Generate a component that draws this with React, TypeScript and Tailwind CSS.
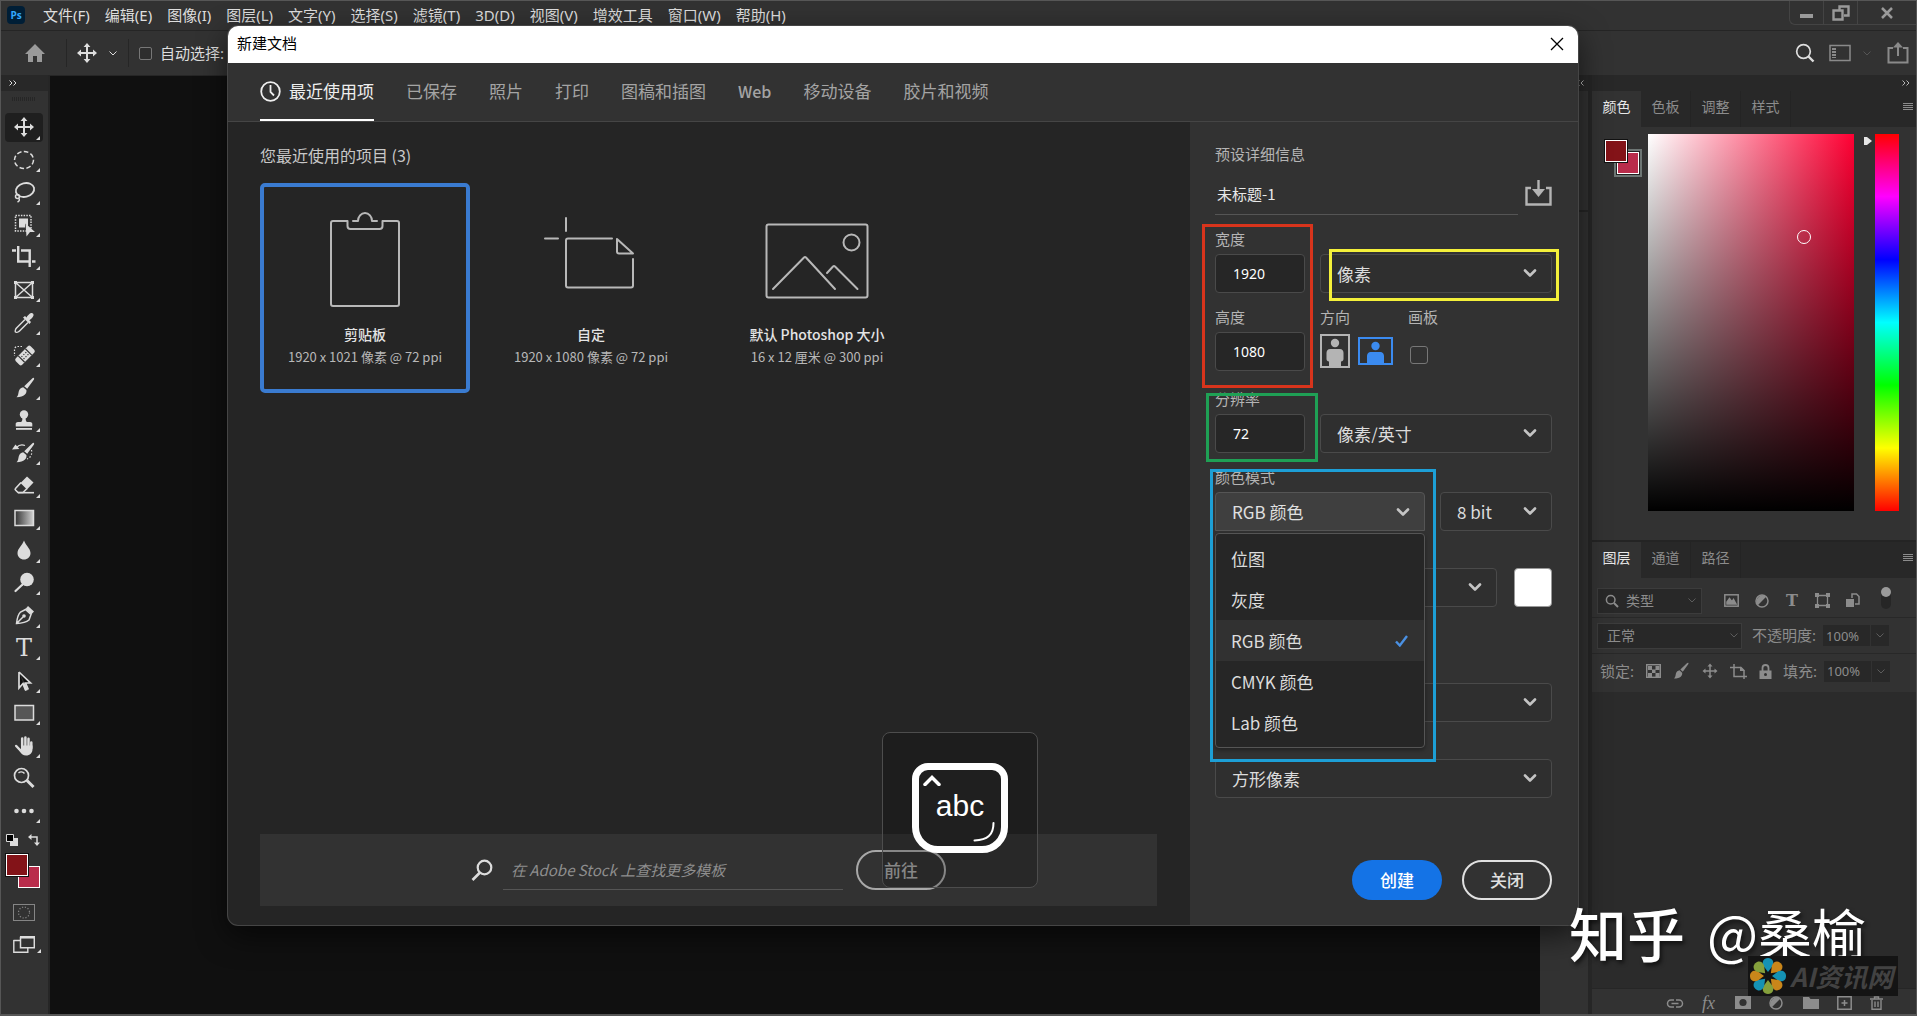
import type { ReactNode } from "react";

const UI = "font-['Noto_Sans','Noto_Sans_CJK_SC',sans-serif]";
const CJK = "font-['Noto_Sans_CJK_SC',sans-serif]";

type SvgProps = { w?: number; h?: number; box?: string; className?: string; children: ReactNode };
function Svg({ w = 24, h = 24, box, className = "", children }: SvgProps) {
  return (
    <svg
      aria-hidden="true"
      width={w}
      height={h}
      viewBox={box ?? `0 0 ${w} ${h}`}
      fill="none"
      stroke="currentColor"
      strokeWidth="1.5"
      className={`shrink-0 ${className}`}
    >
      {children}
    </svg>
  );
}

const MOVE = "M12 2l3.4 4H13v5h5V8.600l4 3.400-4 3.400V13h-5v5h2.400L12 22l-3.400-4H11v-5H6v2.400L2 12l4-3.400V11h5V6H8.600z";

function MoveIcon({ size = 24 }: { size?: number }) {
  return (
    <Svg w={size} h={size} box="0 0 24 24">
      <path d={MOVE} fill="currentColor" stroke="none" />
    </Svg>
  );
}

function BrushShape() {
  return (
    <g fill="currentColor" stroke="none">
      <path d="M21.800 2c.6.500.4 1.200 0 1.800l-6.600 9-3-2.600 8-7.600c.5-.6 1.100-1 1.600-.6z" />
      <path d="M11.200 11.200l3.200 2.800c.6 3.400-1.800 7-9.900 7.200 2-1.800 1.600-3.600 2.300-6 .6-2.200 2.300-3.600 4.400-4z" />
    </g>
  );
}

function Chevron({ className = "" }: { className?: string }) {
  return (
    <Svg w={14} h={9} className={className}>
      <path d="M2 1.500l5 5 5-5" strokeWidth="2.600" strokeLinecap="round" strokeLinejoin="round" />
    </Svg>
  );
}

function ThinChevron({ className = "" }: { className?: string }) {
  return (
    <Svg w={8} h={5} className={className}>
      <path d="M.5.5L4 4 7.500.5" strokeWidth="1" />
    </Svg>
  );
}

function Magnifier({ size = 14 }: { size?: number }) {
  return (
    <Svg w={size} h={size} box="0 0 14 14">
      <circle cx="5.700" cy="5.700" r="4.300" />
      <path d="M9 9l4 4" strokeWidth="2" />
    </Svg>
  );
}

const TOOLS: { name: string; icon: ReactNode; corner?: boolean }[] = [
  { name: "移动工具", icon: <MoveIcon /> },
  {
    name: "椭圆选框工具",
    icon: (
      <Svg>
        <ellipse cx="12" cy="12" rx="9.500" ry="8.500" strokeDasharray="4.600 2.400" />
      </Svg>
    ),
  },
  {
    name: "套索工具",
    icon: (
      <Svg>
        <ellipse cx="13" cy="10" rx="9.300" ry="6.800" transform="rotate(-14 13 10)" strokeWidth="1.800" />
        <circle cx="5.500" cy="16.500" r="2" />
        <path d="M6.500 18c1.500 1.500 1 3-1 4" />
      </Svg>
    ),
  },
  {
    name: "对象选择工具",
    icon: (
      <Svg>
        <rect x="3.500" y="2.500" width="15.500" height="15.500" strokeDasharray="1.500 1.200" />
        <path d="M7 5.500h9v8l-3-3v4H7z" fill="currentColor" stroke="none" />
        <path d="M13.500 10.500l9.500 8.500h-5l-3.500 4.500z" fill="currentColor" stroke="none" />
      </Svg>
    ),
  },
  {
    name: "裁剪工具",
    icon: (
      <Svg>
        <path d="M0 5.500h4M6.200 1v15.500h11M9 5.500h8.700V22M20 16.500h3.500" strokeWidth="2.400" />
      </Svg>
    ),
  },
  {
    name: "图框工具",
    icon: (
      <Svg>
        <path d="M3.500 4.500h17v15h-17zM3.500 4.500l17 15M20.500 4.500l-17 15" />
        <path d="M2 3h3v3H2zM19 3h3v3h-3zM2 18h3v3H2zM19 18h3v3h-3z" fill="currentColor" stroke="none" />
      </Svg>
    ),
  },
  {
    name: "吸管工具",
    icon: (
      <Svg>
        <path d="M13 8.500L4.500 17c-1 1-1.600 3.200-1 4 .8.600 3 0 4-1l8.500-8.500" />
        <path
          d="M11 6.500l2-1.500 1.500 1.500c1-2 2.500-3.500 4.500-4.500 1.500-.5 3 1 2.500 2.500-.8 2-2.300 3.500-4.200 4.700L19 11l-1.500 2z"
          fill="currentColor"
          stroke="none"
        />
      </Svg>
    ),
  },
  {
    name: "污点修复画笔工具",
    icon: (
      <Svg>
        <path d="M10 3.500H5.500a3 3 0 0 0-3 3V13" strokeDasharray="1.500 1.500" strokeWidth="1.200" />
        <g transform="rotate(-45 13 12.500)">
          <rect x="2.500" y="8" width="21" height="9" rx="2" fill="currentColor" stroke="none" />
          <path d="M8 8v9M18 8v9" stroke="#323232" strokeWidth="1.200" />
          <path d="M9.500 11h7M9.500 14h7" stroke="#323232" strokeWidth="1.200" strokeDasharray="1.200 1.600" />
        </g>
      </Svg>
    ),
  },
  {
    name: "画笔工具",
    icon: (
      <Svg>
        <BrushShape />
      </Svg>
    ),
  },
  {
    name: "仿制图章工具",
    icon: (
      <Svg>
        <g fill="currentColor" stroke="none">
          <circle cx="12" cy="6.500" r="4.200" />
          <path d="M10.500 9h3c0 3 .5 4.500 1.500 5h3c1.800 0 2.300 1 2.300 2v2.500H3.700V16c0-1 .5-2 2.300-2h3c1-.5 1.500-2 1.500-5z" />
          <path d="M4 20h16v1.800H4z" />
        </g>
      </Svg>
    ),
  },
  {
    name: "历史记录画笔工具",
    icon: (
      <Svg>
        <BrushShape />
        <path d="M0 8.500l3.500-5 3.800 4.500z" fill="currentColor" stroke="none" />
        <path d="M4.500 6.500C7 3.800 10 3.500 13 4.500" strokeWidth="1.200" />
        <path d="M19.500 9c.8 4-.5 7.500-4.500 9" strokeDasharray="1.500 1.800" strokeWidth="1.200" />
      </Svg>
    ),
  },
  {
    name: "橡皮擦工具",
    icon: (
      <Svg>
        <path d="M15 3.500l6.500 6L15 16.500l-6.500-6.500z" fill="currentColor" stroke="none" />
        <path d="M9 9.500L3.500 15.500c-.5.500-.5 1 0 1.500L6 19.500h5l4-4" strokeWidth="1.600" />
        <path d="M6 19.700h16" strokeWidth="1.600" />
      </Svg>
    ),
  },
  {
    name: "渐变工具",
    icon: (
      <Svg>
        <defs>
          <linearGradient id="toolGradient">
            <stop offset="0" stopColor="#333" />
            <stop offset="1" stopColor="#d0d0d0" />
          </linearGradient>
        </defs>
        <rect x="3" y="4.500" width="18.500" height="15" fill="url(#toolGradient)" />
      </Svg>
    ),
  },
  {
    name: "模糊工具",
    icon: (
      <Svg>
        <path d="M12 2.500c1.800 5 6.500 8 6.500 12.500 0 4-3 6.500-6.500 6.500S5.500 19 5.500 15C5.500 10.500 10.200 7.500 12 2.500z" fill="currentColor" stroke="none" />
      </Svg>
    ),
  },
  {
    name: "减淡工具",
    icon: (
      <Svg>
        <circle cx="15" cy="8.500" r="6.800" fill="currentColor" stroke="none" />
        <path d="M10.500 13.500l-7 6.500" strokeWidth="2.200" strokeLinecap="round" />
      </Svg>
    ),
  },
  {
    name: "钢笔工具",
    icon: (
      <Svg>
        <path d="M4.500 20.500C5 16 6.500 11 8.500 9l5-2.500 5.500 5-2 5.500c-2.500 2-8 3.200-12.500 3.500zM5 20l6-6" />
        <circle cx="12" cy="13" r="1.800" fill="currentColor" stroke="none" />
        <path d="M13.500 6l2.500-3 6 5.500-2.700 3z" fill="currentColor" stroke="none" />
      </Svg>
    ),
  },
  { name: "横排文字工具", icon: <span className="font-['DejaVu_Serif',serif] text-2xl leading-6">T</span> },
  {
    name: "路径选择工具",
    icon: (
      <Svg>
        <path d="M7 3l11.500 11h-5l2.800 6.500M7 3v16l4-4.500 2.800 6.500" fill="#111" strokeWidth="1.700" />
        <path d="M11.700 14.500l2.800 7" strokeWidth="3" />
      </Svg>
    ),
  },
  {
    name: "矩形工具",
    icon: (
      <Svg>
        <rect x="3" y="4.500" width="18.500" height="14.500" fill="#575757" />
      </Svg>
    ),
  },
  {
    name: "抓手工具",
    icon: (
      <Svg>
        <g strokeLinecap="round" strokeWidth="2.500">
          <path d="M10.200 12.500V4.500M13.400 12V3.500M16.500 12.500V4.700M19.300 14V8.500M4.200 12l4.300 4.500" />
        </g>
        <path d="M9 11.500h11.500V15c0 4-2.500 6.500-6.500 6.500-3 0-4.500-1.500-5.500-3l-3-4.500 3.500 1z" fill="currentColor" stroke="none" />
      </Svg>
    ),
  },
  {
    name: "缩放工具",
    corner: false,
    icon: (
      <Svg>
        <circle cx="9.500" cy="9.500" r="7" strokeWidth="1.700" />
        <path d="M6.500 7c1.500-1.600 4.500-1.600 6 .5" strokeWidth="1.300" />
        <path d="M15 14.500l6.500 6.500" strokeWidth="3" />
      </Svg>
    ),
  },
  {
    name: "编辑工具栏",
    icon: (
      <Svg>
        <g fill="currentColor" stroke="none">
          <circle cx="4.500" cy="12" r="2.300" />
          <circle cx="12" cy="12" r="2.300" />
          <circle cx="19.500" cy="12" r="2.300" />
        </g>
      </Svg>
    ),
  },
];

const MENUS = ["文件(F)", "编辑(E)", "图像(I)", "图层(L)", "文字(Y)", "选择(S)", "滤镜(T)", "3D(D)", "视图(V)", "增效工具", "窗口(W)", "帮助(H)"];

function MenuBar() {
  return (
    <header className="flex h-[30px] shrink-0 items-center border-b border-[#252525] bg-[#323232] pb-0.5 pl-1.5">
      <span className="flex h-[18px] w-[18px] items-center justify-center rounded-[4px] bg-[#001e36] font-['Open_Sans',sans-serif] text-[10px] leading-none font-bold text-[#31a8ff]">
        Ps
      </span>
      <nav className="ml-[18px] flex items-center gap-[15px] text-[15px] leading-5 whitespace-nowrap text-[#dedede]">
        {MENUS.map((m) => (
          <button key={m} type="button">
            {m}
          </button>
        ))}
      </nav>
      <div className="ml-auto flex h-6 self-start rounded-bl-md border-b border-l border-[#444] text-[#9a9a9a]">
        <button type="button" aria-label="最小化" className="flex w-[34px] items-center justify-center border-r border-[#444]">
          <span className="mt-1.5 h-1 w-[13px] bg-current" />
        </button>
        <button type="button" aria-label="还原" className="flex w-[34px] items-center justify-center border-r border-[#444]">
          <Svg w={18} h={16}>
            <path d="M7.500 5V1.500h9v9H12M1.500 5.500h9v9h-9z" strokeWidth="2.400" />
            <path d="M4.500 8.500h3v3h-3z" fill="#323232" stroke="none" />
          </Svg>
        </button>
        <button type="button" aria-label="退出" className="flex w-[58px] items-center justify-center">
          <Svg w={14} h={12}>
            <path d="M2 1l10 10M12 1L2 11" strokeWidth="2.500" />
          </Svg>
        </button>
      </div>
    </header>
  );
}

function OptionsBar() {
  return (
    <div className="flex h-11 shrink-0 items-center bg-[#323232] text-[#dedede]">
      <button type="button" aria-label="主页" className="ml-6 text-[#9a9a9a]">
        <Svg w={20} h={20}>
          <path d="M10 1L0 11h3v8h5v-6h4v6h5v-8h3z" fill="currentColor" stroke="none" />
        </Svg>
      </button>
      <span className="ml-[21px] h-7 w-px bg-[#262626]" />
      <button type="button" aria-label="移动工具预设" className="ml-2 flex items-center gap-2.5">
        <MoveIcon size={24} />
        <ThinChevron />
      </button>
      <span className="ml-[11px] h-7 w-px bg-[#262626]" />
      <label className="ml-2.5 flex items-center gap-2 text-[15px] whitespace-nowrap">
        <input type="checkbox" className="h-[13px] w-[13px] appearance-none rounded-[2px] border border-[#777] bg-[#2e2e2e]" />
        自动选择:
      </label>
      <div className="mr-[7px] ml-auto flex items-center text-[#8a8a8a]">
        <button type="button" aria-label="搜索" className="text-[#dedede]">
          <Svg w={20} h={20}>
            <circle cx="8.500" cy="8.500" r="6.800" strokeWidth="1.700" />
            <path d="M13.500 13.500l5 5" strokeWidth="2.400" />
          </Svg>
        </button>
        <button type="button" aria-label="选择工作区" className="ml-3.5">
          <Svg w={22} h={18}>
            <rect x="1" y="1.500" width="20" height="15" />
            <path d="M5 4v10" strokeWidth="4" strokeDasharray="2 1" />
          </Svg>
        </button>
        <ThinChevron className="ml-3 text-[#555]" />
        <button type="button" aria-label="共享图像" className="ml-4">
          <Svg w={22} h={22}>
            <path d="M6 6H1.500v14.500h19V6H16M11 14V3" strokeWidth="2" />
            <path d="M11 0l5 5.500H6z" fill="currentColor" stroke="none" />
          </Svg>
        </button>
      </div>
    </div>
  );
}

function Swatches({ ring = "" }: { ring?: string }) {
  return (
    <div className="relative h-[34px] w-[34px]">
      <span className={`absolute right-0 bottom-0 h-[22px] w-[22px] border border-white bg-[#b92c4b] ${ring}`} />
      <span className="absolute top-0 left-0 h-[22px] w-[22px] border border-white bg-[#831318] shadow-[0_0_0_1px_#111]" />
    </div>
  );
}

function Toolbox() {
  return (
    <aside className="flex w-[49px] shrink-0 flex-col border-r-2 border-[#262626] bg-[#323232] text-[#dcdcdc]">
      <div className="flex h-4 items-center bg-[#282828] pl-2">
        <Svg w={8} h={6}>
          <path d="M.5.5L3 3 .5 5.500M4.500.5L7 3 4.500 5.500" strokeWidth="1" />
        </Svg>
      </div>
      <div className="h-5 px-[11px] pt-1.5">
        <div className="h-1 w-6 bg-[repeating-linear-gradient(90deg,#262626_0_1px,#323232_1px_2px)]" />
      </div>
      <div className="flex h-[716px] flex-col">
        {TOOLS.map((t, i) => (
          <button
            key={t.name}
            type="button"
            aria-label={t.name}
            className="relative flex min-h-0 flex-1 items-center justify-center pr-px"
          >
            <span className={i === 0 ? "flex h-[29px] w-[38px] items-center justify-center rounded-sm bg-[#1f1f1f]" : "flex"}>{t.icon}</span>
            {t.corner !== false && (
              <Svg w={4} h={4} className="absolute right-2 bottom-1">
                <path d="M4 0v4H0z" fill="currentColor" stroke="none" />
              </Svg>
            )}
          </button>
        ))}
      </div>
      <div className="mt-[7px] flex gap-[9px] pl-[5px]">
        <button type="button" aria-label="默认颜色">
          <Svg w={13} h={12}>
            <path d="M4 4h8v8H4z" fill="currentColor" stroke="none" />
            <path d="M.5.5h7v7h-7z" fill="#000" strokeWidth="1" />
          </Svg>
        </button>
        <button type="button" aria-label="切换颜色">
          <Svg w={12} h={12}>
            <path d="M2 3h7v6" />
            <path d="M3.500 0v6L0 3zM6 8.500h6L9 12z" fill="currentColor" stroke="none" />
          </Svg>
        </button>
      </div>
      <div className="mt-2 pl-[5px]">
        <Swatches />
      </div>
      <button type="button" aria-label="快速蒙版" className="mt-4 ml-3 w-[22px] text-[#858585]">
        <Svg w={22} h={17}>
          <rect x=".5" y=".5" width="21" height="16" strokeWidth="1" />
          <circle cx="11" cy="8.500" r="5.500" strokeDasharray="1.200 1.700" strokeWidth="1.200" />
        </Svg>
      </button>
      <button type="button" aria-label="屏幕模式" className="mt-[15px] ml-3 flex w-[28px] items-end">
        <Svg w={22} h={17}>
          <path d="M.5 4.500h7M.8 4v12.200h14V12" strokeWidth="1.400" />
          <path d="M7.500 1.500h13.800v10.200H7.500z" fill="#323232" />
          <path d="M7 1.200h15" strokeWidth="2.400" />
        </Svg>
        <Svg w={4} h={4} className="ml-0.5">
          <path d="M4 0v4H0z" fill="currentColor" stroke="none" />
        </Svg>
      </button>
    </aside>
  );
}

function PanelTabs({ tabs }: { tabs: string[] }) {
  return (
    <div className="flex h-9 bg-[#282828] text-sm text-[#8c8c8c]">
      {tabs.map((t, i) => (
        <button
          key={t}
          type="button"
          className={i === 0 ? "w-[49px] bg-[#323232] pb-1 text-[#e8e8e8]" : "w-[50px] border-r border-[#242424] pb-1"}
        >
          {t}
        </button>
      ))}
      <button type="button" aria-label="面板菜单" className="mr-[3px] ml-auto pb-1">
        <Svg w={10} h={8}>
          <path d="M0 .5h10M0 2.500h10M0 4.500h10M0 6.500h10" strokeWidth="1" />
        </Svg>
      </button>
    </div>
  );
}

function ColorPanel() {
  return (
    <section aria-label="颜色">
      <PanelTabs tabs={["颜色", "色板", "调整", "样式"]} />
      <div className="flex pt-[7px] pr-[17px] pb-[29px] pl-[13px]">
        <div className="mt-1.5 shrink-0">
          <Swatches ring="shadow-[0_0_0_1px_#222,0_0_0_3px_#6d7674]" />
        </div>
        <div className="relative ml-[9px] h-[377px] flex-1 bg-[linear-gradient(to_top,#000,transparent),linear-gradient(to_right,#fff,#ff0033)]">
          <span className="absolute top-[96px] left-[149px] h-[14px] w-[14px] rounded-full border border-white" />
        </div>
        <Svg w={9} h={10} className="mt-0.5 ml-[9px] text-[#e6e6e6]">
          <path d="M1 1h3l5 4-5 4H1z" fill="currentColor" stroke="none" />
        </Svg>
        <div className="ml-[3px] w-6 bg-[linear-gradient(to_bottom,#f00,#f0f_16.6%,#00f_33.3%,#0ff_50%,#0f0_66.6%,#ff0_83.3%,#f00)]" />
      </div>
    </section>
  );
}

function Percent({ id, label }: { id: string; label: string }) {
  return (
    <div className="flex items-center">
      <label htmlFor={id} className="text-[15px] whitespace-nowrap">
        {label}
      </label>
      <input id={id} defaultValue="100%" className="ml-[7px] h-[21px] w-[47px] bg-[#282828] pl-[3px] text-[13px]" />
      <span className="ml-px flex h-[21px] w-[18px] items-center justify-center bg-[#282828] text-[#5c5c5c]">
        <ThinChevron />
      </span>
    </div>
  );
}

function LayersPanel() {
  return (
    <section aria-label="图层" className="flex min-h-0 flex-1 flex-col border-t-2 border-[#242424] text-[#8c8c8c]">
      <PanelTabs tabs={["图层", "通道", "路径"]} />
      <div className="flex h-10 items-center border-b border-[#282828] pt-1.5 pl-[5px]">
        <div className="relative flex items-center">
          <span className="pointer-events-none absolute left-2">
            <Magnifier />
          </span>
          <select aria-label="滤镜类型" className="h-[26px] w-[105px] appearance-none border border-[#3c3c3c] bg-[#282828] pl-7 text-sm leading-5">
            <option>类型</option>
          </select>
          <ThinChevron className="pointer-events-none absolute right-1.5 text-[#5c5c5c]" />
        </div>
        <div className="ml-[22px] flex items-center gap-4">
          <Svg w={15} h={13}>
            <rect x=".8" y=".8" width="13.400" height="11.400" />
            <path d="M3 10V8l2.500-3.500L8 8l1.500-2.500L12 10z" fill="currentColor" />
          </Svg>
          <Svg w={14} h={14}>
            <circle cx="7" cy="7" r="6" />
            <path d="M2.800 11.200a6 6 0 0 1 8.400-8.400z" fill="currentColor" stroke="none" />
          </Svg>
          <span className="w-3.5 text-center font-['DejaVu_Serif',serif] text-base leading-4 font-bold">T</span>
          <Svg w={15} h={15}>
            <path d="M2.500 2.500h10v10h-10z" strokeWidth="1.300" />
            <path d="M0 0h4v4H0zM11 0h4v4h-4zM0 11h4v4H0zM11 11h4v4h-4z" fill="currentColor" stroke="none" />
          </Svg>
          <Svg w={14} h={15}>
            <path d="M6 5V1h4.500L13 3.500V11H9" />
            <path d="M0 6h8v8H0z" fill="currentColor" stroke="none" />
          </Svg>
        </div>
        <span className="mb-1.5 ml-[21px] h-[22px] w-2.5 rounded-full bg-[#262626]">
          <span className="block h-2.5 w-2.5 rounded-full bg-[#9a9a9a]" />
        </span>
      </div>
      <div className="flex h-9 items-center gap-2.5 border-b border-[#282828] pl-[5px]">
        <div className="relative flex items-center">
          <select aria-label="混合模式" className="h-[26px] w-[145px] appearance-none border border-[#3c3c3c] bg-[#282828] pl-[9px] text-sm leading-5">
            <option>正常</option>
          </select>
          <ThinChevron className="pointer-events-none absolute right-1 text-[#5c5c5c]" />
        </div>
        <Percent id="opacity" label="不透明度:" />
      </div>
      <div className="flex h-[38px] items-center pb-1 pl-2">
        <span className="text-[15px] whitespace-nowrap">锁定:</span>
        <div className="mr-[11px] ml-3 flex flex-1 items-center justify-between">
          <Svg w={15} h={14}>
            <rect x=".7" y=".7" width="13.600" height="12.600" strokeWidth="1.400" />
            <path d="M2 2h4v4H2zM9.500 2h4v4h-4zM6 5.500h3.500v3.500H6zM2 9h4v4H2zM9.500 9h4v4h-4z" fill="currentColor" stroke="none" />
          </Svg>
          <Svg w={18} h={18} box="2 1 22 22">
            <BrushShape />
          </Svg>
          <MoveIcon size={18} />
          <Svg w={18} h={15}>
            <path d="M4 0v12.500h13M0 3.500h11l3 3V15" />
            <path d="M10 2.500L15 7h-5z" fill="currentColor" stroke="none" />
          </Svg>
          <Svg w={13} h={15}>
            <path d="M3.500 7V4a3 3 0 0 1 6 0v3" strokeWidth="1.800" />
            <path d="M.5 6.500h12V15H.5z" fill="currentColor" stroke="none" />
            <circle cx="6.500" cy="10.500" r="1.500" fill="#323232" stroke="none" />
          </Svg>
        </div>
        <div className="mr-[26px]">
          <Percent id="fill" label="填充:" />
        </div>
      </div>
      <div className="min-h-0 flex-1 bg-[#2b2b2b]" />
      <div className="flex h-[26px] items-center justify-end gap-[18px] border-t border-[#262626] pt-0.5 pr-[33px]">
        <Svg w={18} h={12}>
          <path d="M8 3H5a3.500 3.500 0 0 0 0 7h3M10 3h3a3.500 3.500 0 0 1 0 7h-3M5.500 6.500h7" />
        </Svg>
        <span className="w-[15px] font-['Liberation_Serif',serif] text-lg leading-4 italic">fx</span>
        <Svg w={16} h={13}>
          <path d="M0 0h16v13H0z" fill="currentColor" stroke="none" />
          <circle cx="8" cy="6.500" r="3.600" fill="#323232" stroke="none" />
        </Svg>
        <Svg w={16} h={14}>
          <circle cx="7" cy="7" r="6" />
          <path d="M2.800 11.200a6 6 0 0 1 8.400-8.400z" fill="currentColor" stroke="none" />
        </Svg>
        <Svg w={16} h={13}>
          <path d="M0 1h6l1.500 2H16v10H0z" fill="currentColor" stroke="none" />
        </Svg>
        <Svg w={15} h={14}>
          <path d="M.8.8h13.400v12.400H.8zM7.500 4v6M4.500 7h6" />
        </Svg>
        <Svg w={13} h={14}>
          <path d="M2 4v9.200h9V4M0 3h13M4.500 3V1h4v2M5 5.500v5.500M8 5.500v5.500" strokeWidth="1.400" />
        </Svg>
      </div>
    </section>
  );
}

const PRESETS: { title: string; detail: string; selected?: boolean; icon: ReactNode }[] = [
  {
    title: "剪贴板",
    detail: "1920 x 1021 像素 @ 72 ppi",
    selected: true,
    icon: (
      <Svg w={70} h={96}>
        <g strokeWidth="2" strokeLinejoin="round" strokeLinecap="round">
          <path d="M17 10H3a2 2 0 0 0-2 2v81a2 2 0 0 0 2 2h64a2 2 0 0 0 2-2V12a2 2 0 0 0-2-2H53" />
          <path d="M17.500 10v5a3 3 0 0 0 3 3h29a3 3 0 0 0 3-3v-5" />
          <path d="M23 10h5a7 8 0 0 1 14 0h5" />
        </g>
      </Svg>
    ),
  },
  {
    title: "自定",
    detail: "1920 x 1080 像素 @ 72 ppi",
    icon: (
      <Svg w={92} h={74} className="mr-1 mb-[17px]">
        <g strokeWidth="2" strokeLinejoin="round" strokeLinecap="round">
          <path d="M23 2v13M2 22.500h13" />
          <path d="M69 22.500H25a2 2 0 0 0-2 2v45a2 2 0 0 0 2 2h63a2 2 0 0 0 2-2V43" />
          <path d="M74 23v12.500a2 2 0 0 0 2 2h14z" />
        </g>
      </Svg>
    ),
  },
  {
    title: "默认 Photoshop 大小",
    detail: "16 x 12 厘米 @ 300 ppi",
    icon: (
      <Svg w={104} h={76} className="mb-2">
        <g strokeWidth="2" strokeLinejoin="round" strokeLinecap="round">
          <rect x="1.500" y="1.500" width="101" height="73" rx="2" />
          <circle cx="86.500" cy="19.500" r="8" />
          <path d="M8 66l31-31.500a1.500 1.500 0 0 1 2 0L70 66M62 50l6-6.500a1.500 1.500 0 0 1 2 0L92.500 66" />
        </g>
      </Svg>
    ),
  },
];

const CATEGORIES = ["已保存", "照片", "打印", "图稿和插图", "Web", "移动设备", "胶片和视频"];
const COLOR_MODES = ["位图", "灰度", "RGB 颜色", "CMYK 颜色", "Lab 颜色"];

function SelectBox({ id, label, value, className = "" }: { id: string; label?: string; value: string; className?: string }) {
  return (
    <div className={`relative flex items-center ${className}`}>
      <select
        id={id}
        aria-label={label}
        className="h-[39px] w-full appearance-none rounded-[4px] border border-[#4a4a4a] bg-[#2f2f2f] pl-4 text-[17px] text-[#dcdcdc]"
      >
        <option>{value}</option>
      </select>
      <Chevron className="pointer-events-none absolute right-[15px] text-[#c4c4c4]" />
    </div>
  );
}

function NumberField({ id, value }: { id: string; value: string }) {
  return (
    <input
      id={id}
      defaultValue={value}
      className="h-[39px] w-[90px] rounded-[4px] border border-[#4a4a4a] bg-[#262626] pl-[17px] font-['Noto_Sans',sans-serif] text-sm text-white"
    />
  );
}

function DetailsPanel() {
  return (
    <form className="relative w-[388px] shrink-0 bg-[#323232] pt-[22px] pr-[26px] pb-[25px] pl-[25px] text-[15px] leading-[18px] text-[#b4b4b4]">
      <h2 className="leading-5">预设详细信息</h2>
      <div className="mt-2.5 flex h-[41px] items-center gap-[7px]">
        <input
          aria-label="文档名称"
          defaultValue="未标题-1"
          className="h-full min-w-0 flex-1 border-b border-[#555] bg-transparent pb-0.5 pl-0.5 text-[15px] text-[#e8e8e8]"
        />
        <button type="button" aria-label="存储预设" className="pb-1 text-[#b4b4b4]">
          <Svg w={27} h={26}>
            <path d="M6 8H1.500v16.500h24V8H21M13.500 0v12" strokeWidth="2.400" />
            <path d="M7 9h13l-6.500 8z" fill="currentColor" stroke="none" />
          </Svg>
        </button>
      </div>

      <label htmlFor="doc-width" className="mt-[15px] block">
        宽度
      </label>
      <div className="mt-1.5 flex gap-[15px]">
        <NumberField id="doc-width" value="1920" />
        <SelectBox id="unit" label="单位" value="像素" className="flex-1" />
      </div>

      <div className="mt-[15px] flex gap-[15px]">
        <div className="w-[90px]">
          <label htmlFor="doc-height" className="block">
            高度
          </label>
          <div className="mt-1.5">
            <NumberField id="doc-height" value="1080" />
          </div>
        </div>
        <div className="w-[73px]">
          <span>方向</span>
          <div className="mt-2 flex items-center gap-2">
            <button type="button" aria-label="纵向" className="text-[#b4b4b4]">
              <Svg w={30} h={34}>
                <rect x="1" y="1" width="28" height="32" strokeWidth="2" />
                <circle cx="15" cy="9" r="4.200" fill="currentColor" stroke="none" />
                <path d="M10.500 15h9c3 0 4 2 4 4v6c0 1.500-1 2.500-2.500 2.500V33H9v-5.500c-1.500 0-2.500-1-2.500-2.500v-6c0-2 1-4 4-4z" fill="currentColor" stroke="none" />
              </Svg>
            </button>
            <button type="button" aria-label="横向" className="text-[#3b8bf0]">
              <Svg w={35} h={28}>
                <rect x="1" y="1" width="33" height="26" strokeWidth="2" />
                <circle cx="17.500" cy="9" r="4.200" fill="currentColor" stroke="none" />
                <path d="M13.500 15h8c3.500 0 4.500 2 4.500 4.500V27H9v-7.500c0-2.500 1-4.500 4.500-4.500z" fill="currentColor" stroke="none" />
              </Svg>
            </button>
          </div>
        </div>
        <div>
          <label htmlFor="artboard" className="block">
            画板
          </label>
          <input id="artboard" type="checkbox" className="mt-5 ml-0.5 block h-[18px] w-[18px] appearance-none rounded-[3px] border border-[#777]" />
        </div>
      </div>

      <label htmlFor="resolution" className="mt-[19px] block">
        分辨率
      </label>
      <div className="mt-1.5 flex gap-[15px]">
        <NumberField id="resolution" value="72" />
        <SelectBox id="resolution-unit" label="分辨率单位" value="像素/英寸" className="flex-1" />
      </div>

      <label htmlFor="color-mode" className="mt-[15px] block">
        颜色模式
      </label>
      <div className="mt-1.5 flex gap-[15px]">
        <div className="relative w-[210px]">
          <select
            id="color-mode"
            defaultValue="RGB 颜色"
            className="h-[39px] w-full appearance-none rounded-t-[4px] border border-[#555] bg-[#3f3f3f] pl-4 text-[17px] text-[#e0e0e0]"
          >
            {COLOR_MODES.map((m) => (
              <option key={m}>{m}</option>
            ))}
          </select>
          <Chevron className="pointer-events-none absolute top-4 right-[15px] text-[#c4c4c4]" />
          <ul
            role="listbox"
            aria-label="颜色模式"
            className="absolute top-[41px] left-0 z-10 w-full rounded-[4px] border border-[#555] bg-[#262626] py-1 text-[17px] text-[#dcdcdc] shadow-[0_2px_4px_rgba(0,0,0,0.35)]"
          >
            {COLOR_MODES.map((m) => {
              const on = m === "RGB 颜色";
              return (
                <li
                  key={m}
                  role="option"
                  aria-selected={on}
                  className={on ? "flex h-[41px] items-center justify-between bg-[#313131] pr-4 pl-[15px]" : "flex h-[41px] items-center pl-[15px]"}
                >
                  {m}
                  {on && (
                    <Svg w={13} h={12} className="text-[#4a90e2]">
                      <path d="M1 6.500l3.800 4L12 1" strokeWidth="2.400" />
                    </Svg>
                  )}
                </li>
              );
            })}
          </ul>
        </div>
        <SelectBox id="bit-depth" label="位深度" value="8 bit" className="flex-1" />
      </div>

      <div className="mt-[37px] flex gap-[17px]">
        <SelectBox id="background" label="背景内容" value="" className="flex-1" />
        <button type="button" aria-label="背景颜色" className="h-[39px] w-[38px] rounded-[4px] border border-[#999] bg-white" />
      </div>
      <SelectBox id="profile" label="颜色配置文件" value="" className="mt-[76px]" />
      <SelectBox id="pixel-ratio" label="像素长宽比" value="方形像素" className="mt-[37px]" />

      <div className="mt-[62px] flex justify-end gap-5 text-[17px] font-medium">
        <button type="submit" className="h-10 w-[90px] rounded-full bg-[#1473e6] text-white">
          创建
        </button>
        <button type="button" className="h-10 w-[90px] rounded-full border-2 border-[#e0e0e0] text-[#e0e0e0]">
          关闭
        </button>
      </div>

      <span className="pointer-events-none absolute top-[102px] left-3 h-[164px] w-[111px] border-[3px] border-[#d8341c]" />
      <span className="pointer-events-none absolute top-[127px] left-[139px] h-[52px] w-[230px] border-[3px] border-[#f4f03a]" />
      <span className="pointer-events-none absolute top-[271px] left-4 h-[69px] w-[112px] border-[3px] border-[#1fa055]" />
      <span className="pointer-events-none absolute top-[347px] left-5 z-20 h-[293px] w-[226px] border-[3px] border-[#1d9fd6]" />
    </form>
  );
}

function NewDocumentDialog() {
  return (
    <div
      role="dialog"
      aria-label="新建文档"
      className={`absolute top-[25px] right-[338px] left-[227px] overflow-hidden rounded-[10px] bg-[#252525] shadow-[0_0_0_1px_#454545,0_10px_30px_rgba(0,0,0,0.6)] ${CJK}`}
    >
      <div className="flex h-[37px] items-center justify-between bg-white pr-3.5 pb-0.5 pl-[9px] text-[15px] text-black">
        <h1>新建文档</h1>
        <button type="button" aria-label="关闭窗口">
          <Svg w={14} h={14}>
            <path d="M1 1l12 12M13 1L1 13" strokeWidth="1.300" />
          </Svg>
        </button>
      </div>
      <div className="flex h-[59px] gap-8 border-b border-[#454545] bg-[#323232] pl-8 text-[17px] whitespace-nowrap text-[#a4a4a4]">
        <button type="button" className="flex items-center gap-2 border-b-2 border-white text-[#eee]">
          <Svg w={21} h={21}>
            <circle cx="10.500" cy="10.500" r="9.300" strokeWidth="1.800" />
            <path d="M10.500 4v7l3.500 3.500" strokeWidth="1.800" />
          </Svg>
          最近使用项
        </button>
        {CATEGORIES.map((c) => (
          <button key={c} type="button" className={c === "Web" ? "pb-0.5 text-base font-medium" : "pb-0.5"}>
            {c}
          </button>
        ))}
      </div>
      <div className="flex">
        <main className="flex flex-1 flex-col pt-[23px] pr-[33px] pb-[19px] pl-8">
          <h2 className="text-base leading-5 text-[#c8c8c8]">您最近使用的项目 (3)</h2>
          <div className="mt-[18px] flex gap-4">
            {PRESETS.map((p) => (
              <button
                key={p.title}
                type="button"
                className={
                  p.selected
                    ? "flex h-[210px] w-[210px] flex-col items-center rounded-[5px] border-4 border-[#3a7bd0]"
                    : "flex h-[210px] w-[210px] flex-col items-center border-4 border-transparent"
                }
              >
                <span className="flex h-[120px] items-end text-[#b8b8b8]">{p.icon}</span>
                <span className="mt-4 text-sm leading-[22px] font-medium whitespace-nowrap text-[#e4e4e4]">{p.title}</span>
                <span className="text-[13px] leading-6 whitespace-nowrap text-[#b8b8b8]">{p.detail}</span>
              </button>
            ))}
          </div>
          <div className="mt-auto flex h-[72px] items-center justify-center bg-[#323232]">
            <Svg w={22} h={22} className="text-[#dcdcdc]">
              <circle cx="13.500" cy="8.500" r="6.800" strokeWidth="2.200" />
              <path d="M9 13.500L1.500 21" strokeWidth="2.600" />
            </Svg>
            <input
              aria-label="搜索模板"
              placeholder="在 Adobe Stock 上查找更多模板"
              className="ml-2.5 h-10 w-[340px] border-b border-[#555] bg-transparent pl-2 text-[15px] italic placeholder:text-[#8e8e8e]"
            />
            <button type="button" className="ml-[13px] h-10 w-[90px] rounded-full border-2 border-[#a8a8a8] text-[17px] font-medium text-[#a8a8a8]">
              前往
            </button>
          </div>
        </main>
        <DetailsPanel />
      </div>
      <div className="absolute top-[706px] left-[654px] flex h-[156px] w-[156px] items-center justify-center rounded-lg border border-[#4d4d4d] bg-black/20 pb-1">
        <div className="relative flex h-[90px] w-24 items-center justify-center rounded-[16px_16px_26px_26px] border-[7px] border-white bg-[#1f1f1f] pb-1">
          <Svg w={18} h={11} className="absolute top-[5px] left-1 text-white">
            <path d="M2 9.500l7-7 7 7" strokeWidth="3.500" strokeLinecap="round" />
          </Svg>
          <span className="font-['Liberation_Sans',sans-serif] text-3xl leading-9 text-white">abc</span>
          <Svg w={22} h={20} className="absolute right-1.5 bottom-1 text-white">
            <path d="M20.500 1c0 12-6 17-19 17.500" strokeWidth="2" strokeLinecap="round" />
          </Svg>
        </div>
      </div>
    </div>
  );
}

const PETALS = [
  { angle: 0, color: "#1592b4" },
  { angle: 45, color: "#c9861a" },
  { angle: 90, color: "#1592b4" },
  { angle: 135, color: "#c9861a" },
  { angle: 180, color: "#85a03c" },
  { angle: 225, color: "#1592b4" },
  { angle: 270, color: "#c9861a" },
  { angle: 315, color: "#85a03c" },
];

function Watermarks() {
  return (
    <>
      <p
        className={`pointer-events-none absolute right-[50px] bottom-[55px] flex items-center gap-[22px] text-[54px] leading-[54px] whitespace-nowrap text-white [text-shadow:2px_3px_4px_rgba(0,0,0,0.6)] ${CJK}`}
      >
        <span className="text-[58px] font-medium">知乎</span>
        <span>@桑榆</span>
      </p>
      <div
        className={`pointer-events-none absolute right-[18px] bottom-[18px] flex h-10 w-[150px] items-center bg-[#141414] text-[#424242] ${CJK}`}
      >
        <Svg w={40} h={38} box="-20 -19 40 38">
          {PETALS.map((p) => (
            <path key={p.angle} d="M0-4l-4.500-6c-2-4 0-8 4.500-8s6.500 4 4.500 8z" fill={p.color} stroke="none" transform={`rotate(${p.angle})`} />
          ))}
        </Svg>
        <span className="ml-0.5 text-[26px] leading-7 font-bold whitespace-nowrap italic">AI资讯网</span>
      </div>
    </>
  );
}

export default function App() {
  return (
    <div className={`relative flex h-screen flex-col overflow-hidden border-x border-t border-b-2 border-[#565656] bg-[#101010] ${UI}`}>
      <MenuBar />
      <OptionsBar />
      <div className="flex min-h-0 flex-1">
        <Toolbox />
        <div className="flex-1 border-t border-[#262626] bg-[#101010]" />
        <div className="flex w-12 flex-col bg-[#323232]">
          <div className="flex h-4 items-center justify-end bg-[#282828] pr-1 text-[#b4b4b4]">
            <Svg w={8} h={6}>
              <path d="M3.500.5L1 3l2.500 2.500M7.500.5L5 3l2.500 2.500" strokeWidth="1" />
            </Svg>
          </div>
          <div className="h-[121px] border-b-2 border-[#262626]" />
        </div>
        <div className="w-1 bg-[#262626]" />
        <div className="flex w-[324px] flex-col bg-[#323232]">
          <div className="flex h-4 shrink-0 items-center justify-end bg-[#282828] pr-1.5 text-[#b4b4b4]">
            <Svg w={8} h={6}>
              <path d="M.5.5L3 3 .5 5.500M4.500.5L7 3 4.500 5.500" strokeWidth="1" />
            </Svg>
          </div>
          <ColorPanel />
          <LayersPanel />
        </div>
      </div>
      <NewDocumentDialog />
      <Watermarks />
    </div>
  );
}
